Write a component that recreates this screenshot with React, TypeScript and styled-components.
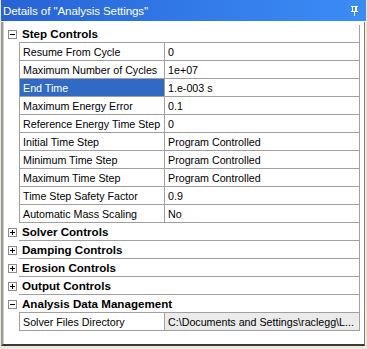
import React from "react";
import styled, { createGlobalStyle } from "styled-components";

const Global = createGlobalStyle`
  html, body { margin: 0; padding: 0; background: #ece9d8; }
  body { font-family: "Liberation Sans", Arial, sans-serif; }
`;

const Window = styled.div`
  width: 367px;
  height: 349px;
  box-sizing: border-box;
  background: #ece9d8;
  display: flex;
  flex-direction: column;
  overflow: hidden;
`;

const TitleBar = styled.div`
  height: 21px;
  margin: 0 1px;
  display: flex;
  align-items: center;
  justify-content: space-between;
  padding: 0 8px 0 2px;
  background: linear-gradient(to right, #2762d4 0%, #3179e6 50%, #3c8cf6 100%);
  color: #fff;
  font-size: 11.6px;
  letter-spacing: -0.1px;
  border-bottom: 1px solid #ffffff;
`;

const Frame = styled.div`
  flex: 1;
  margin: 0 2px 3px 1px;
  display: flex;
  flex-direction: column;
  background: #ffffff;
  border-left: 2px solid #9a9a9a;
  border-right: 1px solid #808080;
  border-bottom: 2px solid #3a3a3a;
  box-shadow: inset 1px 0 0 #d4d0c8;
  padding: 3px 4px 0 0;
`;

const Grid = styled.div`
  display: flex;
  flex-direction: column;
  border-right: 1px solid #a0a0a0;
`;

const HeaderRow = styled.div`
  display: flex;
  height: 18px;
  align-items: stretch;
`;

const Gutter = styled.div`
  width: 16px;
  flex: none;
  display: flex;
  align-items: center;
  justify-content: center;
`;

const HeaderLabel = styled.div`
  flex: 1;
  display: flex;
  align-items: center;
  padding-left: 3px;
  font-weight: bold;
  font-size: 11.6px;
  color: #000;
  border-bottom: 1px solid #a0a0a0;
`;

const Row = styled.div`
  display: flex;
  height: 18px;
`;

const Cell = styled.div<{ $w?: number; $sel?: boolean; $ro?: boolean }>`
  ${(p) => (p.$w ? `width: ${p.$w}px; flex: none;` : "flex: 1; min-width: 0;")}
  box-sizing: border-box;
  display: flex;
  align-items: center;
  padding-left: 3px;
  font-size: 10.7px;
  white-space: nowrap;
  overflow: hidden;
  border-left: 1px solid #a0a0a0;
  border-bottom: 1px solid #a0a0a0;
  background: ${(p) => (p.$sel ? "#316ac5" : p.$ro ? "#ebebeb" : "#ffffff")};
  color: ${(p) => (p.$sel ? "#ffffff" : "#000000")};
`;

const Box = styled.div`
  width: 9px;
  height: 9px;
  box-sizing: border-box;
  border: 1px solid #8c8c8c;
  background: #fff;
  margin-left: 2px;
`;

const Sign = styled.svg`
  display: block;
`;

const Expander = ({ open }: { open: boolean }) => (
  <Box>
    <Sign width="7" height="7" viewBox="0 0 7 7">
      <rect x="1" y="3" width="5" height="1" fill="#000" />
      {!open && <rect x="3" y="1" width="1" height="5" fill="#000" />}
    </Sign>
  </Box>
);

const Pin = () => (
  <svg width="7" height="10" viewBox="0 0 7 10">
    <rect x="0" y="0" width="7" height="1" fill="#fff" />
    <rect x="1" y="1" width="1" height="4" fill="#fff" />
    <rect x="4" y="1" width="2" height="4" fill="#fff" />
    <rect x="0" y="5" width="7" height="1" fill="#fff" />
    <rect x="3" y="6" width="1" height="4" fill="#fff" />
  </svg>
);

type Item = { label: string; value: string; sel?: boolean; ro?: boolean };
type Section = { title: string; open: boolean; items: Item[] };

const sections: Section[] = [
  {
    title: "Step Controls",
    open: true,
    items: [
      { label: "Resume From Cycle", value: "0" },
      { label: "Maximum Number of Cycles", value: "1e+07" },
      { label: "End Time", value: "1.e-003 s", sel: true },
      { label: "Maximum Energy Error", value: "0.1" },
      { label: "Reference Energy Time Step", value: "0" },
      { label: "Initial Time Step", value: "Program Controlled" },
      { label: "Minimum Time Step", value: "Program Controlled" },
      { label: "Maximum Time Step", value: "Program Controlled" },
      { label: "Time Step Safety Factor", value: "0.9" },
      { label: "Automatic Mass Scaling", value: "No" },
    ],
  },
  { title: "Solver Controls", open: false, items: [] },
  { title: "Damping Controls", open: false, items: [] },
  { title: "Erosion Controls", open: false, items: [] },
  { title: "Output Controls", open: false, items: [] },
  {
    title: "Analysis Data Management",
    open: true,
    items: [
      {
        label: "Solver Files Directory",
        value: "C:\\Documents and Settings\\raclegg\\L...",
        ro: true,
      },
    ],
  },
];

export default function App() {
  return (
    <>
      <Global />
      <Window>
        <TitleBar>
          <span>Details of "Analysis Settings"</span>
          <Pin />
        </TitleBar>
        <Frame>
          <Grid>
            {sections.map((s) => (
              <React.Fragment key={s.title}>
                <HeaderRow>
                  <Gutter>
                    <Expander open={s.open} />
                  </Gutter>
                  <HeaderLabel>{s.title}</HeaderLabel>
                </HeaderRow>
                {s.items.map((it) => (
                  <Row key={it.label}>
                    <Gutter />
                    <Cell $w={145} $sel={it.sel}>
                      {it.label}
                    </Cell>
                    <Cell $ro={it.ro}>{it.value}</Cell>
                  </Row>
                ))}
              </React.Fragment>
            ))}
          </Grid>
        </Frame>
      </Window>
    </>
  );
}
